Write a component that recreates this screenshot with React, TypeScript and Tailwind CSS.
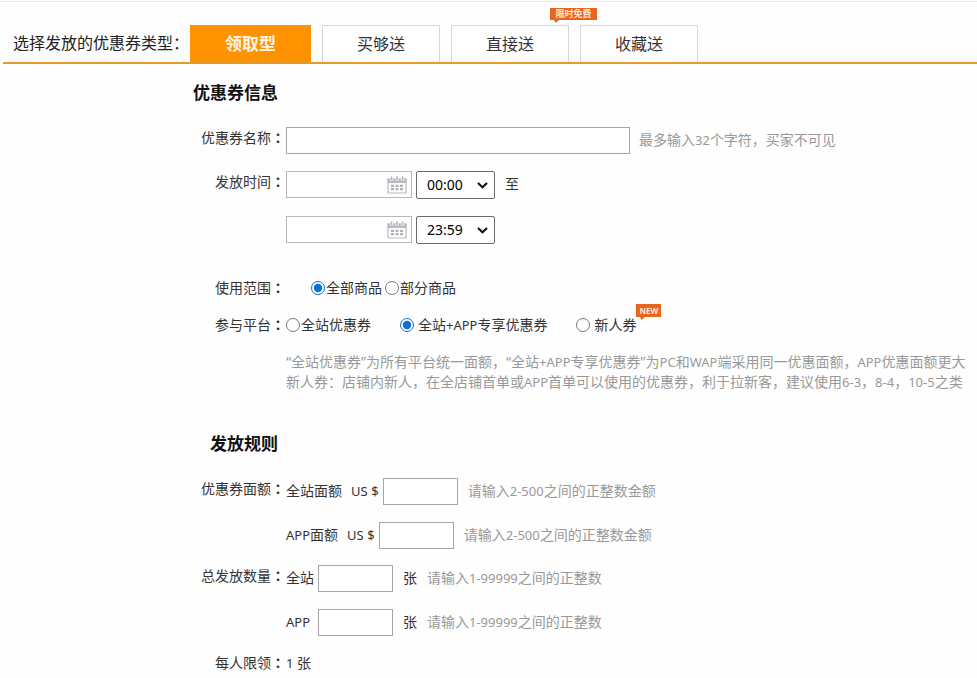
import { useState, type ReactNode } from "react";

const tabs = [
  { name: "领取型" },
  { name: "买够送" },
  { name: "直接送", badge: "限时免费" },
  { name: "收藏送" },
];

/* Sets Latin letters and digits one step smaller than the Chinese text around them. */
function Mixed({ text }: { text: string }) {
  return text.split(/([A-Za-z0-9$+-]+)/).map((part, i) =>
    i % 2 ? (
      <span key={i} className="text-[13px] leading-none">
        {part}
      </span>
    ) : (
      part
    ),
  );
}

function Badge({ children, className }: { children: ReactNode; className: string }) {
  return (
    <span
      className={`absolute flex items-center justify-center bg-[#e8651d] font-bold text-[#ffe9d8] whitespace-nowrap ${className}`}
    >
      {children}
      <svg className="absolute top-full left-1 h-[3px] w-[5px]" viewBox="0 0 5 3" aria-hidden="true">
        <path d="M0 0H5L1.5 3Z" fill="#e8651d" />
      </svg>
    </span>
  );
}

function Row({
  label,
  htmlFor,
  className = "",
  children,
}: {
  label: string;
  htmlFor?: string;
  className?: string;
  children: ReactNode;
}) {
  const text = (
    <>
      {label}
      <span className="font-['Noto_Sans_CJK_JP',sans-serif] font-bold">：</span>
    </>
  );
  return (
    <div className={`flex items-start ${className}`}>
      {htmlFor ? (
        <label htmlFor={htmlFor} className="w-[286px] shrink-0 pr-px text-right leading-5">
          {text}
        </label>
      ) : (
        <span className="w-[286px] shrink-0 pr-px text-right leading-5">{text}</span>
      )}
      <div className="min-w-0 flex-1">{children}</div>
    </div>
  );
}

function DateTime({ id, hour, after }: { id: string; hour: string; after?: string }) {
  return (
    <div className="flex h-7 items-start gap-1">
      <div className="flex h-[27px] w-[126px] items-center border border-[#b8b8b8] bg-white pr-1">
        <input id={id} type="text" aria-label={`${id} date`} className="h-full min-w-0 flex-1 px-1 outline-none" />
        <svg className="h-[18px] w-5 shrink-0" viewBox="0 0 20 18" aria-hidden="true">
          <path d="M1 3H19V17H1Z" fill="#fff" stroke="#b9b9c0" strokeWidth="1.2" />
          <path d="M0.5 2.5H19.5V7H0.5Z" fill="#b9b9c0" />
          <path d="M4.5 0V4.5M10 0V4.5M15.5 0V4.5" stroke="#fff" strokeWidth="3.4" />
          <path d="M4.5 0.5V4M10 0.5V4M15.5 0.5V4" stroke="#b0b0b8" strokeWidth="1.6" />
          <path d="M4 9.8H7M8.5 9.8H11.5M13 9.8H16M4 13.2H7M8.5 13.2H11.5M13 13.2H16" stroke="#b0b0b8" strokeWidth="2.2" />
        </svg>
      </div>
      <div className="relative">
        <select
          aria-label={`${id} hour`}
          defaultValue={hour}
          className="h-7 w-[79px] appearance-none rounded-[2px] border border-[#6b6b6b] bg-white pl-[10px] text-black"
        >
          <option>{hour}</option>
        </select>
        <svg className="pointer-events-none absolute top-[11px] right-[7px] h-[7px] w-[11px]" viewBox="0 0 11 7" aria-hidden="true">
          <path d="M1 1L5.5 5.3L10 1" fill="none" stroke="#111" strokeWidth="2.1" />
        </svg>
      </div>
      {after && <span className="ml-[6px] leading-[26px]">{after}</span>}
    </div>
  );
}

function Radio({
  group,
  label,
  checked,
  onPick,
  className,
  children,
}: {
  group: string;
  label: string;
  checked: boolean;
  onPick: () => void;
  className: string;
  children?: ReactNode;
}) {
  return (
    <label className={`relative flex items-center ${className}`}>
      <input type="radio" name={group} checked={checked} onChange={onPick} className="m-0 size-[14px] accent-[#0b72d3]" />
      <span>
        <Mixed text={label} />
      </span>
      {children}
    </label>
  );
}

function Amount({ id, label }: { id: string; label: string }) {
  return (
    <div className="flex items-start leading-[25px]">
      <label htmlFor={id} className="flex gap-[9px]">
        <span>
          <Mixed text={label} />
        </span>
        <span>
          <Mixed text="US $" />
        </span>
      </label>
      <input id={id} type="text" className="ml-1 h-[27px] w-[75px] border border-[#a6a6a6] bg-white px-1 outline-none" />
      <span className="ml-[10px] text-[#999]">
        <Mixed text="请输入2-500之间的正整数金额" />
      </span>
    </div>
  );
}

function Quantity({ id, label }: { id: string; label: string }) {
  return (
    <div className="flex items-start leading-[25px]">
      <label htmlFor={id} className="w-8">
        <Mixed text={label} />
      </label>
      <input id={id} type="text" className="h-[27px] w-[75px] border border-[#a6a6a6] bg-white px-1 outline-none" />
      <span className="ml-[10px]">张</span>
      <span className="ml-[10px] text-[#999]">
        <Mixed text="请输入1-99999之间的正整数" />
      </span>
    </div>
  );
}

export default function App() {
  const [tab, setTab] = useState(0);
  const [scope, setScope] = useState(0);
  const [platform, setPlatform] = useState(1);

  return (
    <main className="min-h-screen overflow-hidden bg-[#fefefe] font-['Noto_Sans','Noto_Sans_CJK_SC',sans-serif] text-[14px] leading-[22px] text-[#333]">
      <div className="mt-px h-px bg-[#e6eaf3]" />
      <header className="ml-[3px] flex items-end border-b-2 border-[#e59a2a] pt-[23px]">
        <span className="w-[187px] shrink-0 pl-[10px] text-[16px] leading-[37px] whitespace-nowrap text-[#222]">
          选择发放的优惠券类型：
        </span>
        <nav className="flex gap-[11px]">
          {tabs.map((t, i) => (
            <button
              key={t.name}
              type="button"
              onClick={() => setTab(i)}
              className={
                i === tab
                  ? "h-[37px] w-[121px] bg-[#ff9200] text-[17px] font-bold text-[#fff6e6]"
                  : "relative h-[37px] w-[118px] border border-b-0 border-[#d4d6dc] bg-white text-[16px]"
              }
            >
              {t.name}
              {t.badge && <Badge className="-top-[18px] left-[98px] h-3 w-[47px] text-[9px] leading-3">{t.badge}</Badge>}
            </button>
          ))}
        </nav>
      </header>

      <form>
        <h2 className="mt-[17px] ml-[193px] text-[17px] leading-6 font-bold text-[#111]">优惠券信息</h2>
        <Row label="优惠券名称" htmlFor="name" className="mt-[22px]">
          <div className="flex items-start leading-[25px]">
            <input id="name" type="text" className="h-[27px] w-[344px] border border-[#a6a6a6] bg-white px-1 outline-none" />
            <span className="ml-[9px] text-[#999]">
              <Mixed text="最多输入32个字符，买家不可见" />
            </span>
          </div>
        </Row>
        <Row label="发放时间" htmlFor="start" className="mt-[17px]">
          <div className="flex flex-col gap-[17px]">
            <DateTime id="start" hour="00:00" after="至" />
            <DateTime id="end" hour="23:59" />
          </div>
        </Row>
        <Row label="使用范围" className="mt-[33px]">
          <div className="flex gap-[3px] pl-[25px]">
            {["全部商品", "部分商品"].map((s, i) => (
              <Radio key={s} group="scope" label={s} checked={scope === i} onPick={() => setScope(i)} className="gap-px" />
            ))}
          </div>
        </Row>
        <Row label="参与平台" className="mt-[15px]">
          <div className="flex gap-[29px]">
            <Radio group="platform" label="全站优惠券" checked={platform === 0} onPick={() => setPlatform(0)} className="gap-px" />
            <Radio group="platform" label="全站+APP专享优惠券" checked={platform === 1} onPick={() => setPlatform(1)} className="gap-1" />
            <Radio group="platform" label="新人券" checked={platform === 2} onPick={() => setPlatform(2)} className="gap-1">
              <Badge className="-top-[10px] left-full h-[13px] w-[25px] text-[8px] leading-3">NEW</Badge>
            </Radio>
          </div>
          <p className="mt-4 leading-5 whitespace-nowrap text-[#999]">
            <Mixed text="“全站优惠券”为所有平台统一面额，“全站+APP专享优惠券”为PC和WAP端采用同一优惠面额，APP优惠面额更大" />
            <br />
            <Mixed text="新人券：店铺内新人，在全店铺首单或APP首单可以使用的优惠券，利于拉新客，建议使用6-3，8-4，10-5之类" />
          </p>
        </Row>

        <h2 className="mt-10 ml-[210px] text-[17px] leading-6 font-bold text-[#111]">发放规则</h2>
        <Row label="优惠券面额" htmlFor="site-amount" className="mt-[22px]">
          <div className="flex flex-col gap-[17px]">
            <Amount id="site-amount" label="全站面额" />
            <Amount id="app-amount" label="APP面额" />
          </div>
        </Row>
        <Row label="总发放数量" htmlFor="site-count" className="mt-4">
          <div className="flex flex-col gap-[17px]">
            <Quantity id="site-count" label="全站" />
            <Quantity id="app-count" label="APP" />
          </div>
        </Row>
        <Row label="每人限领" className="mt-4">
          <Mixed text="1 张" />
        </Row>
      </form>
    </main>
  );
}
